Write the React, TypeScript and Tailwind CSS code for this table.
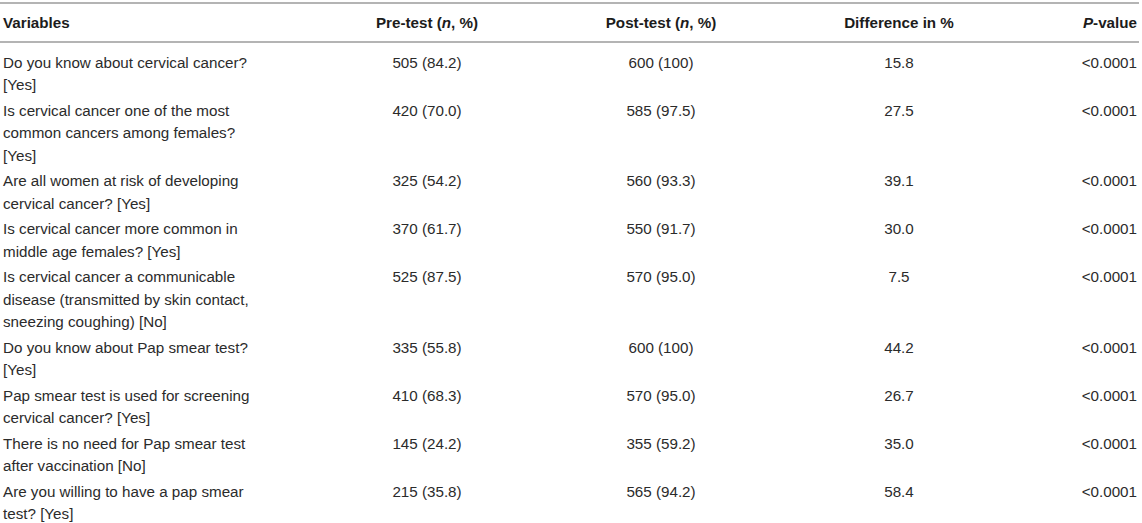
const rows = [
  { q: ["Do you know about cervical cancer?", "[Yes]"], pre: "505 (84.2)", post: "600 (100)", diff: "15.8", p: "<0.0001" },
  { q: ["Is cervical cancer one of the most", "common cancers among females?", "[Yes]"], pre: "420 (70.0)", post: "585 (97.5)", diff: "27.5", p: "<0.0001" },
  { q: ["Are all women at risk of developing", "cervical cancer? [Yes]"], pre: "325 (54.2)", post: "560 (93.3)", diff: "39.1", p: "<0.0001" },
  { q: ["Is cervical cancer more common in", "middle age females? [Yes]"], pre: "370 (61.7)", post: "550 (91.7)", diff: "30.0", p: "<0.0001" },
  { q: ["Is cervical cancer a communicable", "disease (transmitted by skin contact,", "sneezing coughing) [No]"], pre: "525 (87.5)", post: "570 (95.0)", diff: "7.5", p: "<0.0001" },
  { q: ["Do you know about Pap smear test?", "[Yes]"], pre: "335 (55.8)", post: "600 (100)", diff: "44.2", p: "<0.0001" },
  { q: ["Pap smear test is used for screening", "cervical cancer? [Yes]"], pre: "410 (68.3)", post: "570 (95.0)", diff: "26.7", p: "<0.0001" },
  { q: ["There is no need for Pap smear test", "after vaccination [No]"], pre: "145 (24.2)", post: "355 (59.2)", diff: "35.0", p: "<0.0001" },
  { q: ["Are you willing to have a pap smear", "test? [Yes]"], pre: "215 (35.8)", post: "565 (94.2)", diff: "58.4", p: "<0.0001" },
];

const cols = "grid grid-cols-[307px_234px_234px_242px_1fr]";

export default function App() {
  return (
    <div className="w-[1142px] h-[523px] overflow-hidden bg-white font-['Liberation_Sans',Arial,sans-serif] text-[15.2px] text-[#2b2b2b]">
      <div className="w-[1139px] mt-[2px] border-t-2 border-[#b4b4b4]">
        <div className={`${cols} h-[39px] pt-[1px] items-center pl-[3px] pr-[2px] border-b-2 border-[#b4b4b4] font-bold text-[#1c1c1c]`}>
          <div>Variables</div>
          <div className="text-center">
            Pre-test (<i>n</i>, %)
          </div>
          <div className="text-center">
            Post-test (<i>n</i>, %)
          </div>
          <div className="text-center">Difference in %</div>
          <div className="text-right">
            <i>P</i>-value
          </div>
        </div>

        <div className="pt-[7px]">
          {rows.map((r, i) => (
            <div key={i} className={`${cols} pl-[3px] pr-[2px] py-[1.5px] leading-[22.5px]`}>
              <div>
                {r.q.map((line, j) => (
                  <div key={j}>{line}</div>
                ))}
              </div>
              <div className="text-center">{r.pre}</div>
              <div className="text-center">{r.post}</div>
              <div className="text-center">{r.diff}</div>
              <div className="text-right">{r.p}</div>
            </div>
          ))}
        </div>
      </div>
    </div>
  );
}
